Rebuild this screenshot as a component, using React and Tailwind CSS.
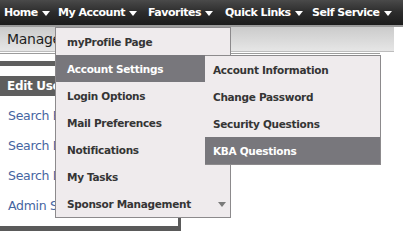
import React from "react";

const Caret = ({ className = "" }) => (
  <svg width="8" height="5" viewBox="0 0 8 5" className={className}>
    <path d="M0 0 H8 L4 5 Z" fill="currentColor" />
  </svg>
);

const navItems = [
  { label: "Home", w: "w-[54px]" },
  { label: "My Account", w: "w-[90px]" },
  { label: "Favorites", w: "w-[77px]" },
  { label: "Quick Links", w: "w-[87px]" },
  { label: "Self Service", w: "w-[90px]" },
];

const mainItems = [
  "myProfile Page",
  "Account Settings",
  "Login Options",
  "Mail Preferences",
  "Notifications",
  "My Tasks",
  "Sponsor Management",
];

const subItems = [
  "Account Information",
  "Change Password",
  "Security Questions",
  "KBA Questions",
];

const links = ["Search Employees", "Search Departments", "Search Delegates", "Admin Settings"];

export default function App() {
  return (
    <div
      className="relative w-[403px] h-[252px] overflow-hidden bg-white"
      style={{ fontFamily: '"DejaVu Sans", Verdana, sans-serif' }}
    >
      {/* top nav */}
      <div className="h-[25px] flex items-center pl-[4px] pt-[2px] bg-gradient-to-b from-[#4a4a4a] via-[#2c2c2c] to-[#1c1c1c]">
        {navItems.map((it) => (
          <div
            key={it.label}
            className={`${it.w} shrink-0 flex items-center gap-[4px] text-white font-bold text-[11px] tracking-[-0.5px] whitespace-nowrap`}
          >
            <span>{it.label}</span>
            <Caret className="text-white" />
          </div>
        ))}
      </div>
      <div className="h-[2px] bg-[#9a9a9a]" />
      {/* title bar */}
      <div className="h-[25px] w-[394px] flex items-center pl-[7px] bg-gradient-to-b from-[#cbcbcb] to-[#e6e6e6] border-b border-[#bdbdbd]">
        <span className="text-[14px] text-[#1e1e1e] tracking-[-0.3px]">Manage Account</span>
      </div>
      <div className="h-[1px] w-[380px] mt-[1px] bg-[#9c9c9c]" />
      {/* left panel */}
      <div className="w-[181px] mt-[7px] flex flex-col border-r-[3px] border-[#5a5a5a]">
        <div className="h-[5px] bg-[#5f5f5f]" />
        <div className="h-[10px]" />
        <div className="h-[20px] bg-[#5e5e5e] flex items-center pl-[7px]">
          <span className="text-white font-bold text-[12px] tracking-[-0.3px] whitespace-nowrap">Edit User Profile</span>
        </div>
        <div className="flex flex-col pt-[5px] pb-[5px]">
          {links.map((l) => (
            <div key={l} className="h-[30px] flex items-center pl-[8px] text-[12.5px] text-[#4565a1] tracking-[-0.3px] whitespace-nowrap">
              {l}
            </div>
          ))}
        </div>
        <div className="h-[5px] bg-[#5a5a5a]" />
      </div>

      {/* main dropdown */}
      <div className="absolute left-[55px] top-[27px] w-[176px] bg-[#efebed] border border-[#8c8a8c] flex flex-col">
        {mainItems.map((it, i) => (
          <div
            key={it}
            className={`h-[27px] flex items-center pl-[11px] pt-[2px] font-bold text-[10.5px] tracking-[-0.3px] whitespace-nowrap relative ${
              i === 1 ? "bg-[#78777c] text-white" : "text-[#353535]"
            }`}
          >
            {it}
            {i === 6 && (
              <Caret className="absolute right-[4px] top-[12px] text-[#7a7a7a]" />
            )}
          </div>
        ))}
      </div>

      {/* submenu */}
      <div className="absolute left-[205px] top-[55px] w-[176px] bg-[#efebed] border border-[#8c8a8c] border-l-0 flex flex-col">
        {subItems.map((it, i) => (
          <div
            key={it}
            className={`h-[27px] flex items-center pl-[8px] pt-[2px] font-bold text-[10.5px] tracking-[-0.3px] whitespace-nowrap ${
              i === 3 ? "bg-[#78777c] text-white" : "text-[#353535]"
            }`}
          >
            {it}
          </div>
        ))}
      </div>
    </div>
  );
}
